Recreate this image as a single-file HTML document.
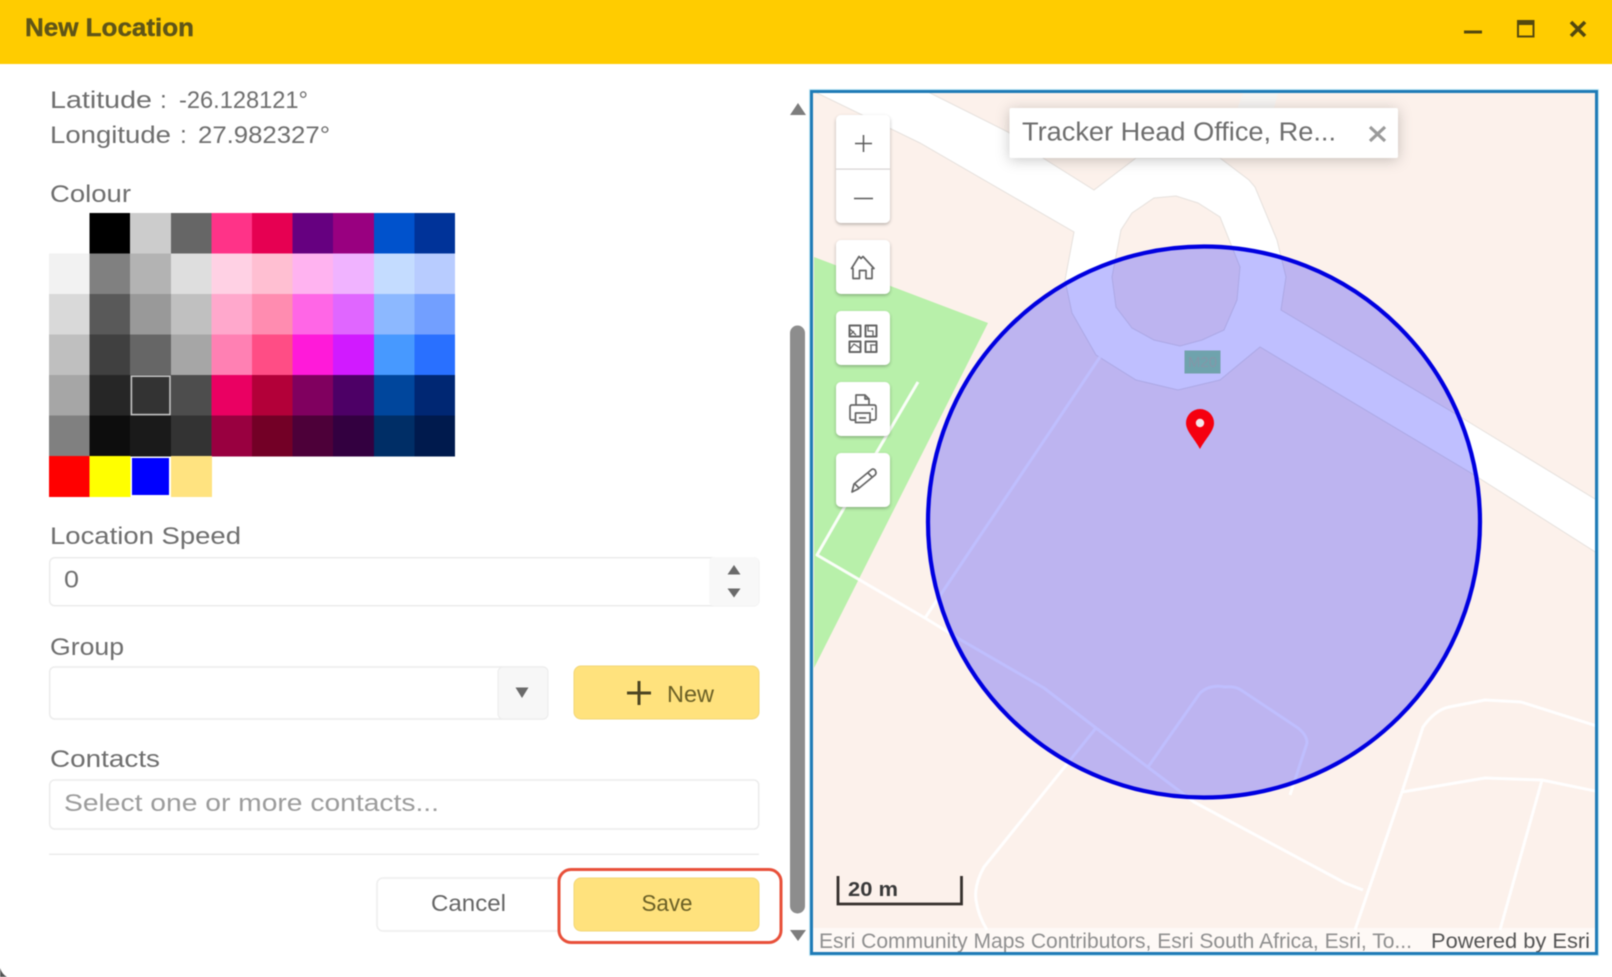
<!DOCTYPE html>
<html><head><meta charset="utf-8"><title>New Location</title>
<style>
html,body{margin:0;padding:0;background:#fff;width:1612px;height:977px;overflow:hidden}
svg{display:block}
text{font-family:"Liberation Sans",sans-serif}
</style></head><body>
<svg width="1612" height="977" viewBox="0 0 1612 977" xmlns="http://www.w3.org/2000/svg">
<defs>
<clipPath id="mapclip"><rect x="812" y="92" width="785" height="862"/></clipPath>
<filter id="sh" x="-30%" y="-30%" width="160%" height="160%"><feDropShadow dx="0" dy="1.5" stdDeviation="1.5" flood-color="#000" flood-opacity=".28"/></filter>
<filter id="sh2" x="-15%" y="-60%" width="130%" height="220%"><feDropShadow dx="0" dy="2" stdDeviation="7" flood-color="#000" flood-opacity=".22"/></filter>
<filter id="soft" filterUnits="userSpaceOnUse" x="-10" y="-10" width="1632" height="997" color-interpolation-filters="sRGB"><feGaussianBlur stdDeviation=".45"/></filter>
</defs>
<g filter="url(#soft)">
<rect x="-10" y="-10" width="1632" height="997" fill="#fff"/>
<!-- header -->
<rect x="-10" y="-10" width="1632" height="74" fill="#ffcc00"/>
<text x="25" y="36" font-size="25" font-weight="700" fill="#5f5518" stroke="#5f5518" stroke-width=".4" textLength="169" lengthAdjust="spacingAndGlyphs">New Location</text>
<rect x="1464" y="30.500" width="18" height="3" fill="#54490f"/>
<rect x="1518" y="21.500" width="15.500" height="15" fill="none" stroke="#54490f" stroke-width="2"/><rect x="1517" y="20" width="17.500" height="5" fill="#54490f"/>
<path d="M1571 22L1585 36M1585 22L1571 36" stroke="#54490f" stroke-width="3.600"/>

<!-- left text -->
<g font-size="24.500" fill="#6f6f6f">
<text x="50" y="108" textLength="102" lengthAdjust="spacingAndGlyphs">Latitude</text>
<text x="160" y="108">:</text>
<text x="179" y="108" textLength="129" lengthAdjust="spacingAndGlyphs">-26.128121°</text>
<text x="50" y="143" textLength="121" lengthAdjust="spacingAndGlyphs">Longitude</text>
<text x="180" y="143">:</text>
<text x="198" y="143" textLength="132" lengthAdjust="spacingAndGlyphs">27.982327°</text>
<text x="50" y="202" textLength="81" lengthAdjust="spacingAndGlyphs">Colour</text>
<text x="50" y="544" textLength="191" lengthAdjust="spacingAndGlyphs">Location Speed</text>
<text x="50" y="655" textLength="74" lengthAdjust="spacingAndGlyphs">Group</text>
<text x="50" y="767" textLength="110" lengthAdjust="spacingAndGlyphs">Contacts</text>
</g>

<!-- palette -->
<g shape-rendering="crispEdges">
<rect x="49" y="213" width="41" height="41" fill="#ffffff"/><rect x="89.6" y="213" width="41" height="41" fill="#000000"/><rect x="130.2" y="213" width="41" height="41" fill="#cccccc"/><rect x="170.8" y="213" width="41" height="41" fill="#666666"/><rect x="211.4" y="213" width="41" height="41" fill="#ff3388"/><rect x="252" y="213" width="41" height="41" fill="#e60052"/><rect x="292.6" y="213" width="41" height="41" fill="#660080"/><rect x="333.2" y="213" width="41" height="41" fill="#990080"/><rect x="373.8" y="213" width="41" height="41" fill="#0052cc"/><rect x="414.4" y="213" width="40.6" height="41" fill="#003399"/>
<rect x="49" y="253.5" width="41" height="41" fill="#f2f2f2"/><rect x="89.6" y="253.5" width="41" height="41" fill="#808080"/><rect x="130.2" y="253.5" width="41" height="41" fill="#b3b3b3"/><rect x="170.8" y="253.5" width="41" height="41" fill="#dedede"/><rect x="211.4" y="253.5" width="41" height="41" fill="#ffd1e4"/><rect x="252" y="253.5" width="41" height="41" fill="#ffbfd2"/><rect x="292.6" y="253.5" width="41" height="41" fill="#ffb3f0"/><rect x="333.2" y="253.5" width="41" height="41" fill="#f0b3ff"/><rect x="373.8" y="253.5" width="41" height="41" fill="#c4dcff"/><rect x="414.4" y="253.5" width="40.6" height="41" fill="#b8ccff"/>
<rect x="49" y="294" width="41" height="41" fill="#d9d9d9"/><rect x="89.6" y="294" width="41" height="41" fill="#595959"/><rect x="130.2" y="294" width="41" height="41" fill="#999999"/><rect x="170.8" y="294" width="41" height="41" fill="#c0c0c0"/><rect x="211.4" y="294" width="41" height="41" fill="#ffa8cc"/><rect x="252" y="294" width="41" height="41" fill="#ff8cb0"/><rect x="292.6" y="294" width="41" height="41" fill="#ff66e6"/><rect x="333.2" y="294" width="41" height="41" fill="#e066ff"/><rect x="373.8" y="294" width="41" height="41" fill="#8cb8ff"/><rect x="414.4" y="294" width="40.6" height="41" fill="#729fff"/>
<rect x="49" y="334.5" width="41" height="41" fill="#bfbfbf"/><rect x="89.6" y="334.5" width="41" height="41" fill="#404040"/><rect x="130.2" y="334.5" width="41" height="41" fill="#666666"/><rect x="170.8" y="334.5" width="41" height="41" fill="#a6a6a6"/><rect x="211.4" y="334.5" width="41" height="41" fill="#ff80b3"/><rect x="252" y="334.5" width="41" height="41" fill="#ff4d85"/><rect x="292.6" y="334.5" width="41" height="41" fill="#ff1ad9"/><rect x="333.2" y="334.5" width="41" height="41" fill="#d11aff"/><rect x="373.8" y="334.5" width="41" height="41" fill="#4799ff"/><rect x="414.4" y="334.5" width="40.6" height="41" fill="#2970ff"/>
<rect x="49" y="375" width="41" height="41" fill="#a6a6a6"/><rect x="89.6" y="375" width="41" height="41" fill="#262626"/><rect x="130.2" y="375" width="41" height="41" fill="#333333"/><rect x="170.8" y="375" width="41" height="41" fill="#4d4d4d"/><rect x="211.4" y="375" width="41" height="41" fill="#ea0062"/><rect x="252" y="375" width="41" height="41" fill="#b30039"/><rect x="292.6" y="375" width="41" height="41" fill="#80005f"/><rect x="333.2" y="375" width="41" height="41" fill="#4d0066"/><rect x="373.8" y="375" width="41" height="41" fill="#00469c"/><rect x="414.4" y="375" width="40.6" height="41" fill="#002773"/>
<rect x="49" y="415.5" width="41" height="41" fill="#808080"/><rect x="89.6" y="415.5" width="41" height="41" fill="#0d0d0d"/><rect x="130.2" y="415.5" width="41" height="41" fill="#1a1a1a"/><rect x="170.8" y="415.5" width="41" height="41" fill="#333333"/><rect x="211.4" y="415.5" width="41" height="41" fill="#990040"/><rect x="252" y="415.5" width="41" height="41" fill="#730026"/><rect x="292.6" y="415.5" width="41" height="41" fill="#4d0039"/><rect x="333.2" y="415.5" width="41" height="41" fill="#330040"/><rect x="373.8" y="415.5" width="41" height="41" fill="#002e66"/><rect x="414.4" y="415.5" width="40.6" height="41" fill="#001a4d"/>
<rect x="49" y="456" width="41" height="41" fill="#ff0000"/><rect x="89.6" y="456" width="41" height="41" fill="#ffff00"/><rect x="170.8" y="456" width="41" height="41" fill="#ffe380"/>
<rect x="132" y="458" width="37" height="37" fill="#0000ff"/>
</g>
<rect x="131.4" y="376.2" width="38.6" height="38.4" fill="none" stroke="#c4c4c4" stroke-width="1.6"/>

<!-- location speed input -->
<rect x="49.700" y="557.700" width="709" height="48" rx="5" fill="#fff" stroke="#ececec" stroke-width="1.500"/>
<path d="M709 562a5 5 0 0 1 5-5h40a5 5 0 0 1 5 5v39a5 5 0 0 1-5 5h-40a5 5 0 0 1-5-5z" fill="#f8f8f8"/>
<path d="M727.500 574.500L734 565L740.500 574.500zM727.500 588.500L734 597.500L740.500 588.500z" fill="#6a6a6a"/>
<text x="64" y="587.500" font-size="24.500" fill="#707070" textLength="15" lengthAdjust="spacingAndGlyphs">0</text>

<!-- group -->
<rect x="49.700" y="667" width="498" height="52" rx="5" fill="#fff" stroke="#ececec" stroke-width="1.500"/>
<path d="M498 672a5 5 0 0 1 5-5h40a5 5 0 0 1 5 5v42a5 5 0 0 1-5 5h-40a5 5 0 0 1-5-5z" fill="#f7f7f7" stroke="#ececec"/>
<path d="M515.500 687.500L522 698L528.500 687.500z" fill="#6a6a6a"/>
<rect x="574" y="666" width="185" height="53" rx="7" fill="#ffe27d" stroke="#f2d676"/>
<path d="M639 681v24M627 693h24" stroke="#4d4522" stroke-width="3"/>
<text x="667" y="702" font-size="23.500" fill="#6b6026" textLength="47" lengthAdjust="spacingAndGlyphs">New</text>

<!-- contacts -->
<rect x="49.700" y="780" width="709" height="49" rx="5" fill="#fff" stroke="#ececec" stroke-width="1.500"/>
<text x="64" y="811" font-size="24.500" fill="#9c9c9c" textLength="375" lengthAdjust="spacingAndGlyphs">Select one or more contacts...</text>
<rect x="49" y="853.500" width="710" height="1.500" fill="#ececec"/>

<!-- buttons -->
<rect x="377" y="878" width="200" height="53" rx="6" fill="#fff" stroke="#eeeeee" stroke-width="1.500"/>
<text x="431" y="911" font-size="23.500" fill="#666" textLength="75" lengthAdjust="spacingAndGlyphs">Cancel</text>
<rect x="559" y="869.500" width="222" height="73" rx="12" fill="#fff" stroke="#e8503a" stroke-width="3"/>
<rect x="574" y="878" width="185" height="53" rx="7" fill="#ffe27d" stroke="#f2d676"/>
<text x="641.500" y="911" font-size="23.500" fill="#6b6026" textLength="51" lengthAdjust="spacingAndGlyphs">Save</text>

<!-- scrollbar -->
<path d="M790 333a7.500 7.500 0 0 1 15 0V906a7.500 7.500 0 0 1-15 0z" fill="#8d8d8d"/>
<path d="M790 115L798 103L806 115z" fill="#7d7d7d"/>
<path d="M790 930L798 941L806 930z" fill="#7d7d7d"/>

<!-- map -->
<g clip-path="url(#mapclip)">
<rect x="811" y="90" width="787" height="866" fill="#fcf1eb"/>
<polygon points="814,257 988,323 814,668" fill="#b8f0aa"/>
<polygon points="1244,90 1279,90 1260,158 1220,158" fill="#f6f4f2"/>
<polygon fill="#fff" stroke="#e6e1dd" stroke-width="1" points="815,92 924,90 1008,132 1043,158 1094,190 1136,158 1220,158 1249,180 1255,187 1277,240 1286,277 1281,310 1454,413 1600,502 1600,555 1471,473 1260,347 1220,380 1178,390 1136,380 1096,355 1072,313 1065,280 1074,232 920,143"/>
<polygon fill="#fcf1eb" stroke="#e6e1dd" stroke-width="1" points="1112,277 1121,230 1132,213 1154,198 1176,196 1198,203 1220,217 1240,267 1237,300 1224,330 1202,340 1180,346 1154,340 1132,328 1116,307"/>
<g fill="none" stroke="#fff" stroke-width="3" stroke-linejoin="round" stroke-opacity=".92">
<path d="M918 382L844 508L817 555L925 618L961 640L1044 688L1096 728L1194 802L1345 883L1363 890"/>
<path d="M925 618L1100 357"/>
<path d="M1096 728L984 867Q974 885 976 900Q978 915 987 930"/>
<path d="M1148 767L1200 693Q1210 684 1225 687Q1235 686 1241 690L1298 728Q1307 735 1307 743L1290 795"/>
<path d="M1355 930L1402 792L1423 727Q1435 710 1449 707L1485 700L1521 702L1600 727"/>
<path d="M1402 792L1485 778L1542 780L1600 792"/>
<path d="M1542 780L1500 930"/>
</g>
<ellipse cx="1204" cy="522" rx="276" ry="275.500" fill="#0000ff" fill-opacity=".25" stroke="#0000e0" stroke-width="4.200"/>
<rect x="1185" y="351" width="35" height="22" fill="#6fa3ad" stroke="#72a0aa"/>
<text x="1202.500" y="367" font-size="15" text-anchor="middle" fill="#8496a8" textLength="29" lengthAdjust="spacingAndGlyphs">M20</text>
<path d="M1200 449C1194 438 1186 431 1186 423a14 14 0 0 1 28 0C1214 431 1206 438 1200 449z" fill="#f5000f"/>
<circle cx="1200" cy="423" r="4.200" fill="#f4e8ea"/>
<rect x="812" y="928" width="785" height="26" fill="#fff" fill-opacity=".55"/>
<path d="M838 876V904H961.500V876" fill="none" stroke="#35302d" stroke-width="2.800"/>
<text x="848" y="896" font-size="20" font-weight="700" fill="#3a3a3a" textLength="50" lengthAdjust="spacingAndGlyphs">20 m</text>
<text x="819" y="948" font-size="21" fill="#8f8f8f" textLength="593" lengthAdjust="spacingAndGlyphs">Esri Community Maps Contributors, Esri South Africa, Esri, To...</text>
<text x="1431" y="948" font-size="21" fill="#555" textLength="159" lengthAdjust="spacingAndGlyphs">Powered by Esri</text>
</g>
<rect x="811.500" y="91.500" width="785" height="862" fill="none" stroke="#1f7bb6" stroke-width="3"/>
<rect x="809.500" y="89.500" width="789" height="866" fill="none" stroke="#c4ebf7" stroke-width="1"/>

<!-- map tools -->
<g fill="#fff" filter="url(#sh)">
<rect x="836" y="115" width="54" height="108" rx="5"/>
<rect x="836" y="240" width="54" height="54" rx="5"/>
<rect x="836" y="311" width="54" height="54" rx="5"/>
<rect x="836" y="382" width="54" height="54" rx="5"/>
<rect x="836" y="453" width="54" height="54" rx="5"/>
</g>
<rect x="836" y="168.500" width="54" height="1.200" fill="#d8d4d4"/>
<path d="M863.500 135v17M855 143.500h17M854 198.500h19" stroke="#5a5a5a" stroke-width="1.500" fill="none"/>
<g fill="none" stroke="#666" stroke-width="1.700" stroke-linejoin="round">
<path d="M853 278.500V268.500H851.500L859 256.500L861 258.500L863 256.500L874 268.500H872V278.500H866V270.500H859.500V278.500z"/>
<rect x="849.500" y="325.500" width="11" height="11" stroke-width="2"/><rect x="865.500" y="325.500" width="11" height="11" stroke-width="2"/><rect x="849.500" y="341.500" width="11" height="10.500" stroke-width="2"/><rect x="865.500" y="341.500" width="11" height="10.500" stroke-width="2"/>
<path d="M850 329L856 335M850 335L854 331M868 326V331H873V336M850 349L854 344L860 348M870 345H876M871 345V351" stroke-width="1.300"/>
<path d="M856 405V395H865L869 399V405M865 395V399H869"/>
<path d="M855 420H851.500Q850 420 850 418V407Q850 405 852 405H874Q876 405 876 407V418Q876 420 874 420H870"/>
<rect x="855.500" y="413" width="14.500" height="9.500"/>
<path d="M859 418h7M871.500 409h1.500"/>
<path d="M852 492L854 484L871 470Q873 468 875 470Q877 473 875 475L858 489z"/>
<path d="M855 484L859 488M868 473L872 477"/>
</g>

<!-- search popup -->
<rect x="1009.500" y="108" width="388.500" height="50" rx="2" fill="#fff" filter="url(#sh2)"/>
<text x="1022" y="140.500" font-size="25.500" fill="#6e6e6e" textLength="314" lengthAdjust="spacingAndGlyphs">Tracker Head Office, Re...</text>
<path d="M1370 127L1385 141M1385 127L1370 141" stroke="#9a9a9a" stroke-width="3.200"/>

<!-- bottom-left corner -->
<path d="M0 968Q2 974 7 977H0z" fill="#555"/>
</g>
</svg>
</body></html>
